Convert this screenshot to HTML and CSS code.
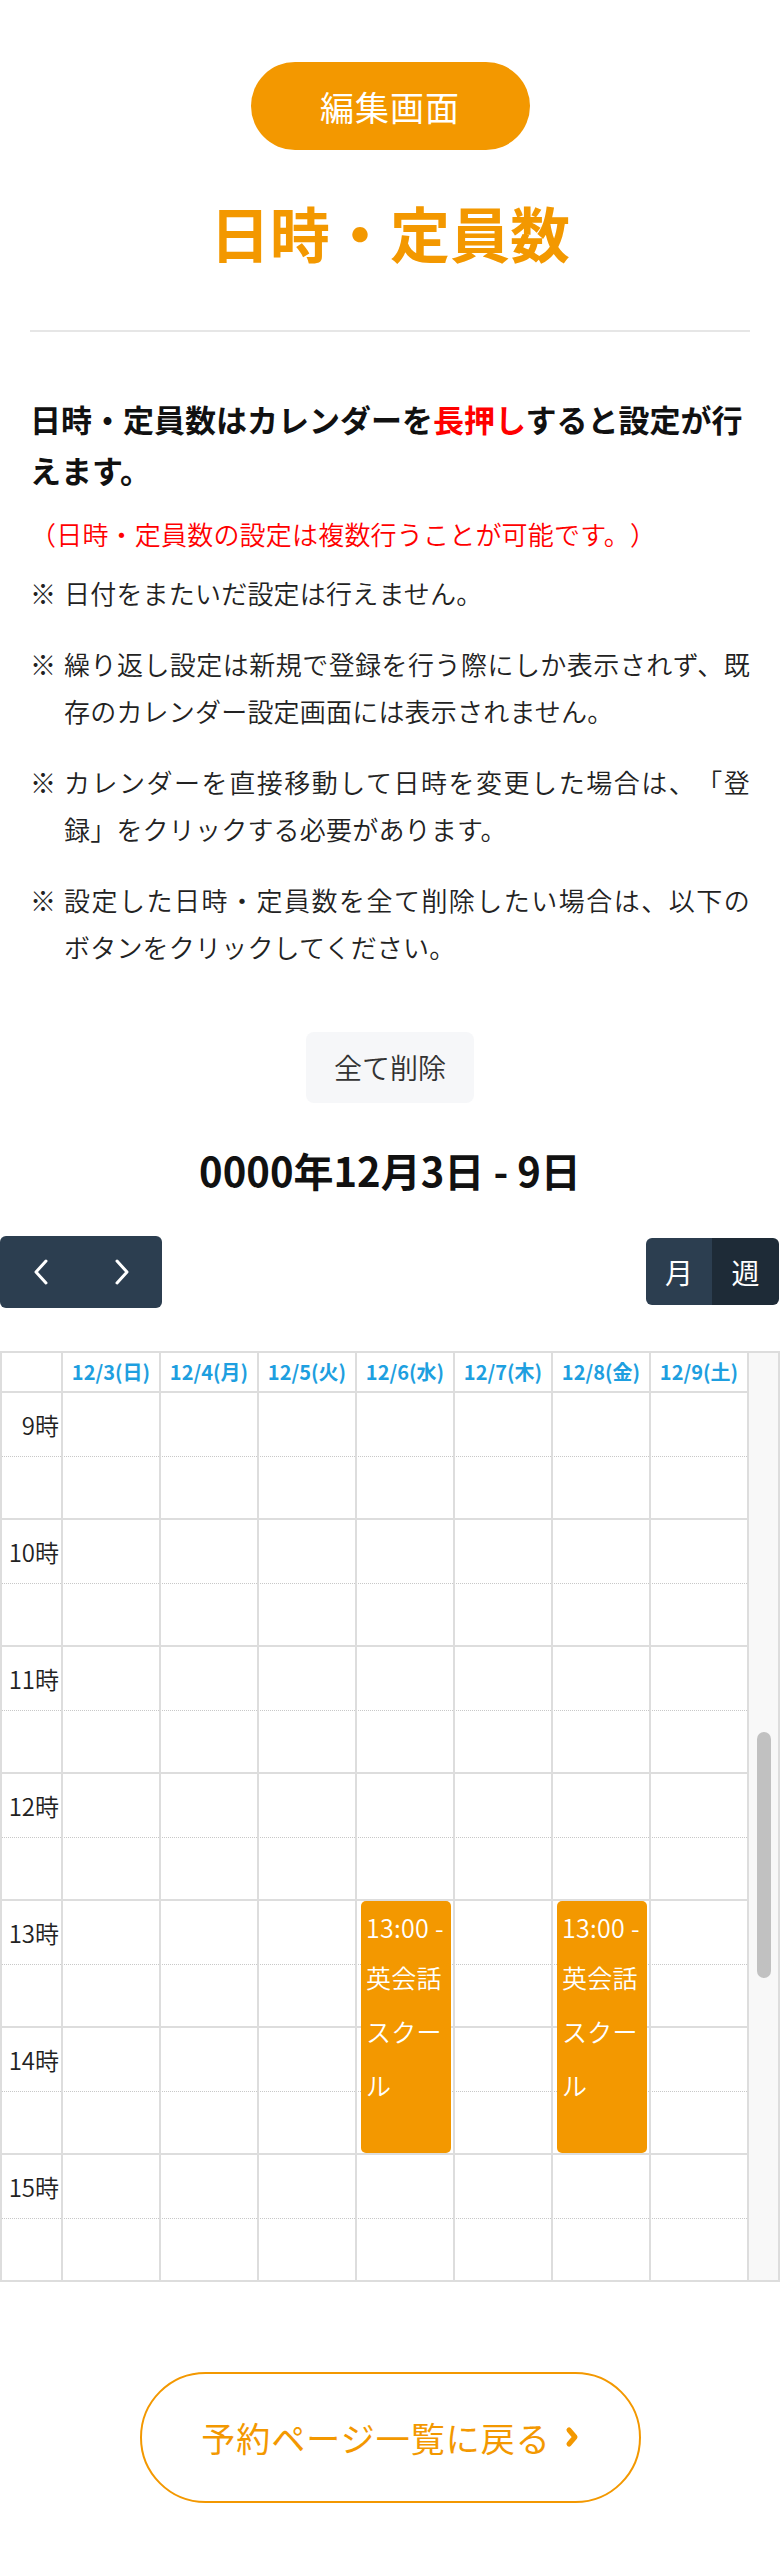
FILE: index.html
```html
<!DOCTYPE html>
<html lang="ja">
<head>
<meta charset="utf-8">
<title>日時・定員数</title>
<link rel="stylesheet" href="styles.css">
</head>
<body>
<div class="page">
  <section class="intro">
    <div class="pill">編集画面</div>
    <h1 class="title">日時・定員数</h1>
    <hr class="rule">
    <p class="lead">日時・定員数はカレンダーを<em>長押し</em>すると設定が行えます。</p>
    <p class="sub">（日時・定員数の設定は複数行うことが可能です。）</p>
    <ul class="notes">
      <li><span class="mark">※</span><span class="txt">日付をまたいだ設定は行えません。</span></li>
      <li><span class="mark">※</span><span class="txt">繰り返し設定は新規で登録を行う際にしか表示されず、既存のカレンダー設定画面には表示されません。</span></li>
      <li><span class="mark">※</span><span class="txt">カレンダーを直接移動して日時を変更した場合は、「登録」をクリックする必要があります。</span></li>
      <li><span class="mark">※</span><span class="txt">設定した日時・定員数を全て削除したい場合は、以下の<span class="nw">ボタン</span>をクリックしてください。</span></li>
    </ul>
    <button class="del" type="button">全て削除</button>
    <h2 class="range">0000年12月3日 - 9日</h2>
  </section>

  <div class="toolbar">
    <div class="btn-group">
      <div class="nav-btn"><svg width="16" height="26" viewBox="0 0 16 26"><polyline points="13,2 3,13 13,24" fill="none" stroke="#fff" stroke-width="3" stroke-linecap="round" stroke-linejoin="round"/></svg></div>
      <div class="nav-btn"><svg width="16" height="26" viewBox="0 0 16 26"><polyline points="3,2 13,13 3,24" fill="none" stroke="#fff" stroke-width="3" stroke-linecap="round" stroke-linejoin="round"/></svg></div>
    </div>
    <div class="btn-group right">
      <div class="view-btn">月</div>
      <div class="view-btn active">週</div>
    </div>
  </div>

  <div class="cal">
    <div class="cal-main">
      <div class="cal-head">
        <div></div>
        <div>12/3(日)</div>
        <div>12/4(月)</div>
        <div>12/5(火)</div>
        <div>12/6(水)</div>
        <div>12/7(木)</div>
        <div>12/8(金)</div>
        <div>12/9(土)</div>
      </div>
      <div class="cal-body">
        <div class="rows">
          <div class="row-a"><span class="time">9時</span></div>
          <div class="row-b"></div>
          <div class="row-a"><span class="time">10時</span></div>
          <div class="row-b"></div>
          <div class="row-a"><span class="time">11時</span></div>
          <div class="row-b"></div>
          <div class="row-a"><span class="time">12時</span></div>
          <div class="row-b"></div>
          <div class="row-a"><span class="time">13時</span></div>
          <div class="row-b"></div>
          <div class="row-a"><span class="time">14時</span></div>
          <div class="row-b"></div>
          <div class="row-a"><span class="time">15時</span></div>
          <div class="row-b last"></div>
        </div>
        <div class="cols">
          <div></div><div></div><div></div><div></div><div></div><div></div><div></div><div></div>
        </div>
        <div class="events">
          <div class="event ev-wed"><div class="t">13:00 -</div><div class="n">英会話スクール</div></div>
          <div class="event ev-fri"><div class="t">13:00 -</div><div class="n">英会話スクール</div></div>
        </div>
      </div>
    </div>
    <div class="cal-gutter"><div class="thumb"></div></div>
  </div>

  <div class="footer">
    <a class="back" href="#">予約ページ一覧に戻る<svg width="14" height="22" viewBox="0 0 14 22"><polyline points="4,4 10,11 4,18" fill="none" stroke="#f39800" stroke-width="5" stroke-linecap="round" stroke-linejoin="round"/></svg></a>
  </div>
</div>
</body>
</html>
```

FILE: styles.css
```css
* { box-sizing: border-box; }

body {
  margin: 0;
  background: #fff;
  color: #222;
  font-family: "Noto Sans CJK JP", "Noto Sans", sans-serif;
  text-spacing-trim: space-all;
}

.page { width: 780px; }

.intro { padding: 0 30px; }

.pill {
  width: 279px;
  height: 88px;
  margin: 62px auto 0;
  border-radius: 44px;
  background: #f39800;
  color: #fff;
  font-size: 34px;
  letter-spacing: 1px;
  display: flex;
  align-items: center;
  justify-content: center;
}

.title {
  margin: 37px 0 0;
  text-align: center;
  font-size: 60px;
  line-height: 90px;
  font-weight: 700;
  color: #f39800;
}

.rule {
  margin: 53px 0 0;
  height: 2px;
  border: 0;
  background: #e6e6e6;
}

.lead {
  margin: 61px 0 0;
  font-size: 31px;
  line-height: 51px;
  font-weight: 700;
  color: #111;
}

.lead em { font-style: normal; color: #ff0000; }

.sub {
  margin: 15px 0 0;
  font-size: 26px;
  letter-spacing: 0.2px;
  line-height: 48px;
  color: #ff0000;
  font-weight: 350;
}

.notes {
  list-style: none;
  margin: 11px 0 0;
  padding: 0;
}

.notes li {
  display: flex;
  font-size: 26px;
  font-weight: 350;
  letter-spacing: 0.2px;
  line-height: 47.5px;
  color: #222;
  margin-bottom: 23px;
}

.notes li:last-child { margin-bottom: 0; }

.mark { flex: none; width: 34px; }
.txt { flex: 1; text-align: justify; }
.nw { white-space: nowrap; }

.del {
  display: block;
  margin: 61px auto 0;
  width: 168px;
  height: 71px;
  border: 0;
  border-radius: 8px;
  background: #f6f7f9;
  font-family: "Noto Sans CJK JP", sans-serif;
  font-size: 28px;
  font-weight: 350;
  color: #333;
  padding: 0;
}

.range {
  margin: 37px 0 0;
  text-align: center;
  font-size: 40px;
  line-height: 60px;
  font-weight: 700;
  color: #111;
}

.toolbar {
  margin-top: 36px;
  display: flex;
  justify-content: space-between;
  align-items: center;
}

.btn-group {
  display: flex;
  border-radius: 6px;
  overflow: hidden;
}

.btn-group.right { margin-right: 1px; }

.nav-btn {
  width: 81px;
  height: 72px;
  background: #2c3e50;
  display: flex;
  align-items: center;
  justify-content: center;
}

.view-btn {
  width: 66px;
  height: 67px;
  background: #2c3e50;
  color: #fff;
  font-size: 28px;
  display: flex;
  align-items: center;
  justify-content: center;
}

.view-btn.active { width: 67px; background: #1e2b37; }

.cal {
  margin-top: 43px;
  display: flex;
  border: 2px solid #ddd;
}

.cal-main { width: 747px; flex: none; }

.cal-head {
  display: grid;
  grid-template-columns: 61px repeat(7, 98px);
}

.cal-head > div {
  height: 40px;
  border-right: 2px solid #ddd;
  border-bottom: 2px solid #ddd;
  display: flex;
  align-items: center;
  justify-content: center;
  font-size: 20px;
  font-weight: 700;
  color: #1e9fe0;
}

.cal-body { display: grid; }
.cal-body > * { grid-area: 1 / 1; }

.row-a {
  height: 64px;
  border-bottom: 1px dotted #c8c8c8;
}

.row-b {
  height: 63px;
  border-bottom: 2px solid #ddd;
}

.row-b.last { height: 61px; border-bottom: 0; }

.time {
  display: block;
  width: 61px;
  padding-right: 4px;
  text-align: right;
  font-size: 24px;
  font-weight: 350;
  line-height: 63px;
  color: #222;
}

.cols {
  display: grid;
  grid-template-columns: 61px repeat(7, 98px);
}

.cols > div { border-right: 2px solid #ddd; }

.events {
  display: grid;
  grid-template-columns: 61px repeat(7, 98px);
  grid-template-rows: repeat(6, 64px 63px) 64px 61px;
}

.event {
  grid-row: 9 / 13;
  margin: 0 4px 2px 4px;
  padding: 3px 0 0 5px;
  background: #f39800;
  border-radius: 5px;
  color: #fff;
  font-size: 25px;
  font-weight: 350;
  letter-spacing: 0.3px;
  overflow: hidden;
}

.event .t { line-height: 46px; white-space: nowrap; }
.event .n { line-height: 54px; }

.ev-wed { grid-column: 5; }
.ev-fri { grid-column: 7; }

.cal-gutter {
  flex: 1;
  background: #f8f8f8;
}

.thumb {
  width: 14px;
  height: 246px;
  margin: 379px auto 0;
  border-radius: 7px;
  background: #c1c1c1;
}

.footer { padding: 90px 0 72px; }

.back {
  display: flex;
  margin: 0 auto;
  width: 501px;
  height: 131px;
  border: 2px solid #f39800;
  border-radius: 66px;
  align-items: center;
  justify-content: center;
  gap: 14px;
  color: #f39800;
  font-size: 34px;
  letter-spacing: 1px;
  text-decoration: none;
}
```
